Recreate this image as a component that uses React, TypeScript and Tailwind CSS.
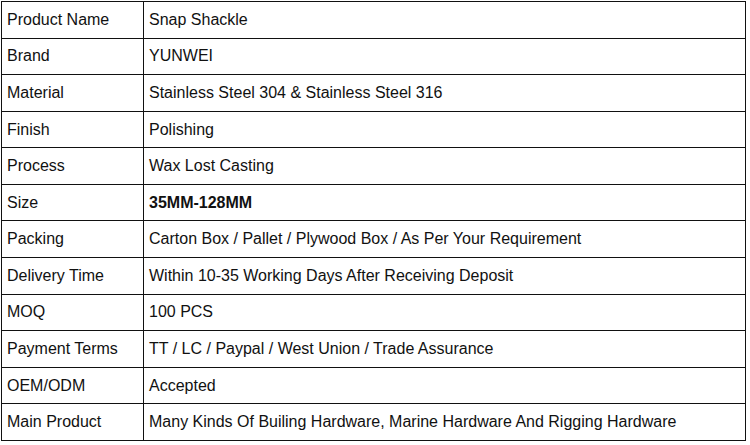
import React from 'react'

const rows: [string, string, boolean?][] = [
    ['Product Name', 'Snap Shackle'],
    ['Brand', 'YUNWEI'],
    ['Material', 'Stainless Steel 304 & Stainless Steel 316'],
    ['Finish', 'Polishing'],
    ['Process', 'Wax Lost Casting'],
    ['Size', '35MM-128MM', true],
    ['Packing', 'Carton Box / Pallet / Plywood Box / As Per Your Requirement'],
    ['Delivery Time', 'Within 10-35 Working Days After Receiving Deposit'],
    ['MOQ', '100 PCS'],
    ['Payment Terms', 'TT / LC / Paypal / West Union / Trade Assurance'],
    ['OEM/ODM', 'Accepted'],
    ['Main Product', 'Many Kinds Of Builing Hardware, Marine Hardware And Rigging Hardware'],
]

const App: React.FC = () => {
    return (
        <div className="w-[750px] h-[445px] bg-white pl-px pt-px font-['Liberation_Sans',Arial,sans-serif] text-[16px] text-[#111]">
            <table className="w-[745px] h-[440px] border-collapse table-fixed">
                <tbody>
                    {rows.map(([label, value, bold]) => (
                        <tr key={label}>
                            <td className="w-[142px] border border-[#111] pl-[5px] align-middle">{label}</td>
                            <td className={`border border-[#111] pl-[5px] align-middle ${bold ? 'font-bold' : ''}`}>{value}</td>
                        </tr>
                    ))}
                </tbody>
            </table>
        </div>
    )
}

export default App
